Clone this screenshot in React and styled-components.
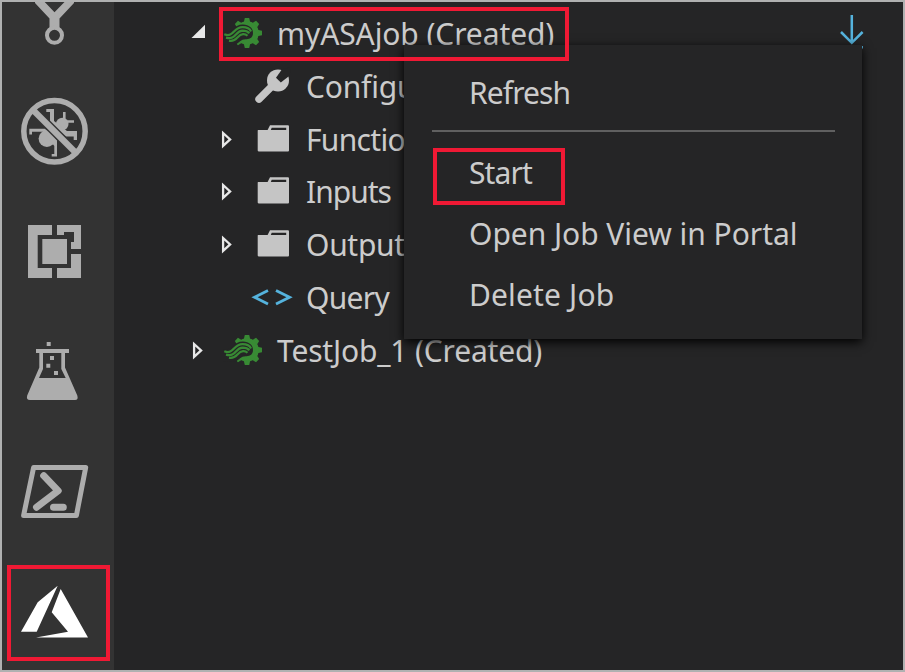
import React from "react";
import styled, { createGlobalStyle } from "styled-components";

const GlobalStyle = createGlobalStyle`
  * { box-sizing: border-box; }
  html, body { margin: 0; padding: 0; overflow: hidden; background: #252526; }
`;

const ROW = 52.8;

const Frame = styled.div`
  position: relative;
  display: flex;
  width: 905px;
  height: 672px;
  overflow: hidden;
  border: 2px solid #b0b1b1;
  background: #252526;
  color: #cccccc;
  font-family: "Noto Sans", "Open Sans", sans-serif;
  font-size: 30px;
`;

const ActivityBar = styled.nav`
  flex: 0 0 112px;
  display: flex;
  flex-direction: column;
  background: #333333;
`;

const ActivityIcon = styled.svg`
  display: block;
  flex: none;
  width: 112px;
  height: ${(p) => p.$height}px;
  color: ${(p) => (p.$active ? "#ffffff" : "#adadad")};
`;

const SideBar = styled.main`
  flex: 1;
  display: flex;
  min-width: 0;
  padding-top: 6px;
`;

const Tree = styled.div`
  flex: 1;
  display: flex;
  flex-direction: column;
`;

const Row = styled.div`
  display: flex;
  height: ${ROW}px;
  padding-left: ${(p) => (p.$level === 0 ? 75 : 104)}px;
`;

const Twisty = styled.svg`
  flex: none;
  width: 30px;
  height: ${ROW}px;
`;

const RowIcon = styled.svg`
  flex: none;
  width: 58px;
  height: ${ROW}px;
`;

const Label = styled.span`
  line-height: ${ROW - 0.9}px;
  white-space: nowrap;
  letter-spacing: ${(p) => p.$track || 0}px;
`;

const RowAction = styled.svg`
  flex: none;
  width: 40px;
  height: ${ROW}px;
  margin-left: auto;
  margin-right: 32px;
`;

const Menu = styled.div`
  position: absolute;
  left: 402px;
  top: 43px;
  width: 458px;
  height: 294px;
  padding: 18px 28px 0;
  background: #252526;
  box-shadow: 0 3px 10px #000000;
`;

const MenuItem = styled.div`
  height: 61px;
  padding-left: 37px;
  line-height: 59px;
  white-space: nowrap;
  letter-spacing: ${(p) => p.$track || 0}px;
`;

const Separator = styled.div`
  height: 2px;
  margin: 6px -1px 11px 0;
  background: #606060;
`;

const Highlight = styled.div`
  position: absolute;
  left: ${(p) => p.$x - 2}px;
  top: ${(p) => p.$y - 2}px;
  width: ${(p) => p.$w}px;
  height: ${(p) => p.$h}px;
  border: 4px solid #f01934;
`;

const SourceControl = () => (
  <ActivityIcon $height={70} viewBox="2 2 112 70">
    <path fill="currentColor" d="M35 2V3L49.5 18.5V29H59.5V18.5L74 3V2H64.5L54.5 12.2L44.7 2Z" />
    <circle cx="54.5" cy="35.3" r="7.5" fill="none" stroke="currentColor" strokeWidth="4" />
  </ActivityIcon>
);

const Debug = () => (
  <ActivityIcon $height={120} viewBox="2 72 112 120">
    <g fill="currentColor">
      <circle cx="62.3" cy="124" r="6.2" />
      <circle cx="46.9" cy="138.6" r="8.3" />
      <path d="M46.3 109H54V121L67 131H77V140H73.7V136.5H66L50 124V112H46.3Z" />
      <path d="M29.3 128.7H45L57 140V156.5H51.7V154H54.3V146L43 131.7H32V134.5H29.3Z" />
      <path d="M63 112H65.6V120H63ZM66 120.2H74V122.8H66Z" />
    </g>
    <path d="M34 111L75 152" stroke="#333333" strokeWidth="9" />
    <path d="M33 110L76 153" stroke="currentColor" strokeWidth="6.2" />
    <circle cx="54.5" cy="131.3" r="30.7" fill="none" stroke="currentColor" strokeWidth="5.5" />
  </ActivityIcon>
);

const Extensions = () => (
  <ActivityIcon $height={120} viewBox="2 192 112 120">
    <g fill="currentColor">
      <path d="M28 225H52V235H37.7V268H52V278H28Z" />
      <path d="M57 278V268H71V254H81V278Z" />
      <path d="M57 225H81V249H71V242H74V232H64V235H57Z" />
      <path d="M42.3 239H67V264H42.3Z" />
    </g>
  </ActivityIcon>
);

const Flask = () => (
  <ActivityIcon $height={120} viewBox="2 312 112 120">
    <path
      fill="currentColor"
      fillRule="evenodd"
      d="M36 349H69V353H65V367.5L77.3 395.5Q78.6 400 75 400H30Q26 400 27.2 395.5L39.3 367.5V353H36ZM43 353V369L39 378H65.7L61.3 369V353Z"
    />
    <path fill="currentColor" d="M46.7 342h4v4h-4zM50 356h4v4h-4zM46.3 363.7h4v4h-4zM54 371h4v4h-4z" />
  </ActivityIcon>
);

const PowerShell = () => (
  <ActivityIcon $height={120} viewBox="2 432 112 120">
    <g fill="none" stroke="currentColor" strokeLinecap="round" strokeLinejoin="round">
      <path strokeWidth="5" d="M33.6 467.5H85.7L76.4 515.4H23.6Z" />
      <path strokeWidth="7" d="M43.7 475.7L58.2 490.8L36.5 507.2M53.5 507.3H63.3" />
    </g>
  </ActivityIcon>
);

const Azure = () => (
  <ActivityIcon $height={118} $active viewBox="2 552 112 118">
    <path
      fill="currentColor"
      d="M57.7 585.7L37.7 602.3L21 631.7H36.7ZM60.7 589L51.7 612.3L68 631.7L36 637.5H88Z"
    />
  </ActivityIcon>
);

const Expanded = () => (
  <Twisty viewBox="189 8 30 52.8">
    <path fill="#e8e8e8" d="M205 24.7V38H191.5Z" />
  </Twisty>
);

const Collapsed = () => (
  <Twisty viewBox="218 113.6 30 52.8">
    <path fill="none" stroke="#e8e8e8" strokeWidth="2.3" d="M223.1 132.6L230.1 139L223.1 145.4Z" />
  </Twisty>
);

const teeth = [0, 45, 90, 135, 180, 225, 270, 315];

const JobIcon = () => (
  <RowIcon viewBox="219 8 58 52.8">
    <g fill="#388a34">
      {teeth.map((a) => (
        <path key={a} transform={`rotate(${a} 247 33)`} d="M244.8 18H249.2L250.6 24H243.4Z" />
      ))}
      <circle cx="247" cy="33" r="11.8" />
    </g>
    <path
      d="M223 32C232 35 233 24.4 243 24.6C249 24.8 253 28 253 33C253 37.3 250 39.4 246 39.2C241 39 239 43 235.5 44.5L223 45Z"
      fill="#252526"
    />
    <g fill="none" stroke="#388a34" strokeWidth="2.2">
      <path d="M224.3 34.2C234 38 233 27.2 242.5 27.2C247 27.2 250 29 251 31.5" />
      <path d="M226 37.6C236 40.5 235 30.8 242.5 30.6C246 30.6 248 31.6 249.3 33.4" />
      <path d="M229 40.6C237 42.5 237 34.4 243 34.1C245 34 246.5 34.8 247.5 35.8" />
    </g>
  </RowIcon>
);

const Wrench = () => (
  <RowIcon viewBox="248 60.8 58 52.8">
    <path d="M259 99L273 85" stroke="#c5c5c5" strokeWidth="7.4" strokeLinecap="round" />
    <circle cx="278" cy="80.2" r="11" fill="#c5c5c5" />
    <path fill="#252526" d="M282 69L276 77.5L280.8 82.4L289.5 75.5L291 67Z" />
  </RowIcon>
);

const Folder = () => (
  <RowIcon viewBox="248 113.6 58 52.8">
    <path
      fill="#c5c5c5"
      fillRule="evenodd"
      d="M258 129.6H267.6L270 124.8H288Q289 124.8 289 126V150Q289 151 288 151H259Q257.7 151 257.7 150V130ZM271.7 127.4L270.8 129.6H286.2V127.4Z"
    />
  </RowIcon>
);

const Code = () => (
  <RowIcon viewBox="248 272 58 52.8">
    <path
      d="M268 290.5L254.5 297.2L268 304M276 290.5L289.6 297.2L276 304"
      fill="none"
      stroke="#55b3dd"
      strokeWidth="2.8"
    />
  </RowIcon>
);

const Download = () => (
  <RowAction viewBox="831 8 40 52.8">
    <path
      d="M851.8 15V42.5M841 32L851.8 42.8L862.6 32M840 47.3H863"
      fill="none"
      stroke="#55b3dd"
      strokeWidth="2.5"
    />
  </RowAction>
);

export default function App() {
  return (
    <>
      <GlobalStyle />
      <Frame>
        <ActivityBar>
          <SourceControl />
          <Debug />
          <Extensions />
          <Flask />
          <PowerShell />
          <Azure />
        </ActivityBar>
        <SideBar>
          <Tree>
            <Row $level={0}>
              <Expanded />
              <JobIcon />
              <Label $track={-0.1}>myASAjob (Created)</Label>
              <Download />
            </Row>
            <Row $level={1}>
              <Twisty />
              <Wrench />
              <Label $track={-0.2}>Configu</Label>
            </Row>
            <Row $level={1}>
              <Collapsed />
              <Folder />
              <Label $track={-0.7}>Functio</Label>
            </Row>
            <Row $level={1}>
              <Collapsed />
              <Folder />
              <Label $track={-1}>Inputs</Label>
            </Row>
            <Row $level={1}>
              <Collapsed />
              <Folder />
              <Label $track={-0.3}>Output</Label>
            </Row>
            <Row $level={1}>
              <Twisty />
              <Code />
              <Label $track={-0.7}>Query</Label>
            </Row>
            <Row $level={0}>
              <Collapsed />
              <JobIcon />
              <Label $track={-0.18}>TestJob_1 (Created)</Label>
            </Row>
          </Tree>
        </SideBar>
        <Menu>
          <MenuItem $track={-0.9}>Refresh</MenuItem>
          <Separator />
          <MenuItem $track={-0.9}>Start</MenuItem>
          <MenuItem $track={-0.04}>Open Job View in Portal</MenuItem>
          <MenuItem $track={0.15}>Delete Job</MenuItem>
        </Menu>
        <Highlight $x={219} $y={7} $w={350} $h={54} />
        <Highlight $x={433} $y={148} $w={132} $h={57} />
        <Highlight $x={7} $y={565} $w={103} $h={96} />
      </Frame>
    </>
  );
}
